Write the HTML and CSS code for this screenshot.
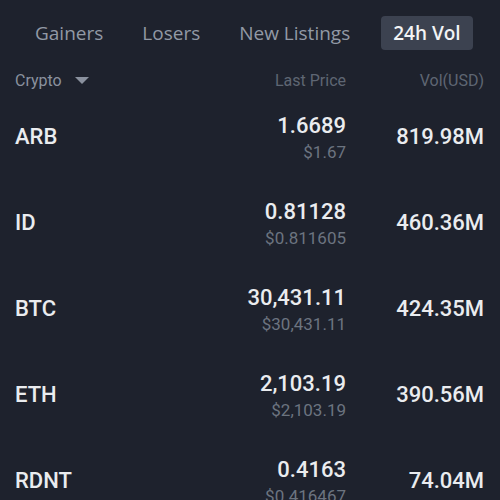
FILE: index.html
```html
<!DOCTYPE html>
<html lang="en">
<head>
    <meta charset="UTF-8">
    <meta name="viewport" content="width=device-width, initial-scale=1.0">
    <title>Markets - 24h Vol</title>
    <link rel="stylesheet" href="styles.css">
</head>
<body>
    <!-- Tabs -->
    <div class="tabs">
        <button class="tab">Gainers</button>
        <button class="tab">Losers</button>
        <button class="tab">New Listings</button>
        <button class="tab active">24h Vol</button>
    </div>

    <!-- Column headers -->
    <div class="head">
        <div class="col-name">Crypto <span class="caret"></span></div>
        <div class="col-price">Last Price</div>
        <div class="col-vol">Vol(USD)</div>
    </div>

    <!-- Rows -->
    <div class="list">
        <div class="row">
            <div class="col-name sym">ARB</div>
            <div class="col-price">
                <div class="price">1.6689</div>
                <div class="fiat">$1.67</div>
            </div>
            <div class="col-vol vol">819.98M</div>
        </div>
        <div class="row">
            <div class="col-name sym">ID</div>
            <div class="col-price">
                <div class="price">0.81128</div>
                <div class="fiat">$0.811605</div>
            </div>
            <div class="col-vol vol">460.36M</div>
        </div>
        <div class="row">
            <div class="col-name sym">BTC</div>
            <div class="col-price">
                <div class="price">30,431.11</div>
                <div class="fiat">$30,431.11</div>
            </div>
            <div class="col-vol vol">424.35M</div>
        </div>
        <div class="row">
            <div class="col-name sym">ETH</div>
            <div class="col-price">
                <div class="price">2,103.19</div>
                <div class="fiat">$2,103.19</div>
            </div>
            <div class="col-vol vol">390.56M</div>
        </div>
        <div class="row">
            <div class="col-name sym">RDNT</div>
            <div class="col-price">
                <div class="price">0.4163</div>
                <div class="fiat">$0.416467</div>
            </div>
            <div class="col-vol vol">74.04M</div>
        </div>
    </div>
</body>
</html>
```

FILE: styles.css
```css
/* General Styles */
* {
    margin: 0;
    padding: 0;
    box-sizing: border-box;
}

body {
    font-family: Roboto, 'Liberation Sans', sans-serif;
    background: #1e222d;
    color: #eaecef;
    height: 500px;
    overflow: hidden;
}

/* Tabs */
.tabs {
    display: flex;
    gap: 15px;
    padding: 16px 0 0 23px;
}

.tab {
    height: 34px;
    padding: 0 12px;
    border: none;
    border-radius: 4px;
    background: none;
    color: #9299a5;
    font-family: 'Open Sans', sans-serif;
    font-size: 19px;
    font-weight: 500;
}

.tab.active {
    margin-left: 4px;
    background: #3c4250;
    color: #f2f3f5;
    font-weight: 600;
}

/* Columns */
.head,
.row {
    display: flex;
    align-items: center;
    padding: 0 16px 0 15px;
}

.col-name {
    flex: 1;
}

.col-price {
    text-align: right;
}

.col-vol {
    width: 138px;
    text-align: right;
}

.head {
    height: 30px;
    margin-top: 15px;
    font-size: 16px;
    color: #5e6673;
}

.head .col-name {
    color: #8a919e;
    display: flex;
    align-items: center;
    gap: 13px;
}

.caret {
    width: 0;
    height: 0;
    border-left: 7px solid transparent;
    border-right: 7px solid transparent;
    border-top: 7px solid #8a919e;
}

/* Rows */
.row {
    height: 86px;
}

.list {
    margin-top: -2px;
}

.row .col-price {
    padding-top: 5px;
}

.sym,
.vol {
    font-size: 22px;
    font-weight: 500;
}

.price {
    font-size: 22px;
    font-weight: 500;
    line-height: 26px;
}

.fiat {
    font-size: 17px;
    line-height: 26px;
    color: #6c7480;
}
```
